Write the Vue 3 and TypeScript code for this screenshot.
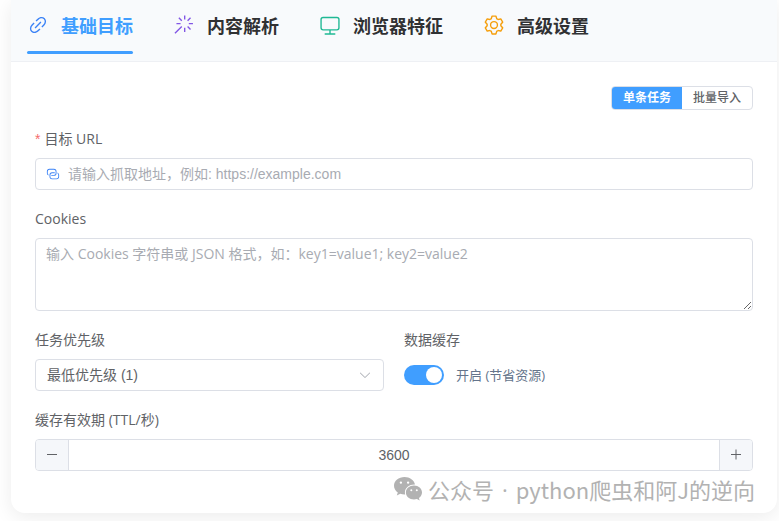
<script setup lang="ts">
import { ref } from 'vue'

interface Tab {
  key: string
  label: string
  tone: string
  icon: string
}

const tabs: Tab[] = [
  {
    key: 'base',
    label: '基础目标',
    tone: 'blue',
    icon: 'M715.648 625.152 670.4 579.904l90.496-90.56c75.008-74.944 85.12-186.368 22.656-248.896-62.528-62.464-173.952-52.352-248.96 22.656L444.16 353.6l-45.248-45.248 90.496-90.496c100.032-99.968 251.968-110.08 339.456-22.656 87.488 87.488 77.312 239.424-22.656 339.456l-90.496 90.496zm-90.496 90.496-90.496 90.496C434.624 906.112 282.688 916.224 195.2 828.8c-87.488-87.488-77.312-239.424 22.656-339.456l90.496-90.496 45.248 45.248-90.496 90.56c-75.008 74.944-85.12 186.368-22.656 248.896 62.528 62.464 173.952 52.352 248.96-22.656l90.496-90.496 45.248 45.248zm0-362.048 45.248 45.248L398.848 670.4 353.6 625.152 625.152 353.6z',
  },
  {
    key: 'parse',
    label: '内容解析',
    tone: 'purple',
    icon: 'M512 64h64v192h-64V64zm0 576h64v192h-64V640zM160 480v-64h192v64H160zm576 0v-64h192v64H736zM249.856 199.04l45.248-45.184L430.848 289.6 385.6 334.848 249.856 199.104zM657.152 606.4l45.248-45.248 135.744 135.744-45.248 45.248L657.152 606.4zM114.048 923.2 68.8 877.952l316.8-316.8 45.248 45.248-316.8 316.8zM702.4 334.848 657.152 289.6l135.744-135.744 45.248 45.248L702.4 334.848z',
  },
  {
    key: 'browser',
    label: '浏览器特征',
    tone: 'green',
    icon: 'M544 768v128h192a32 32 0 1 1 0 64H288a32 32 0 1 1 0-64h192V768H192A128 128 0 0 1 64 640V256a128 128 0 0 1 128-128h640a128 128 0 0 1 128 128v384a128 128 0 0 1-128 128H544zM192 192a64 64 0 0 0-64 64v384a64 64 0 0 0 64 64h640a64 64 0 0 0 64-64V256a64 64 0 0 0-64-64H192z',
  },
  {
    key: 'advanced',
    label: '高级设置',
    tone: 'orange',
    icon: 'M600.704 64a32 32 0 0 1 30.464 22.208l35.2 109.376c14.784 7.232 28.928 15.36 42.432 24.512l112.384-24.192a32 32 0 0 1 34.432 15.36L944.32 364.8a32 32 0 0 1-4.032 37.504l-77.12 85.12a357.12 357.12 0 0 1 0 49.024l77.12 85.248a32 32 0 0 1 4.032 37.504l-88.704 153.6a32 32 0 0 1-34.432 15.296L708.8 803.904c-13.44 9.088-27.648 17.28-42.368 24.512l-35.264 109.376A32 32 0 0 1 600.704 960H423.296a32 32 0 0 1-30.464-22.208L357.696 828.48a351.616 351.616 0 0 1-42.56-24.64l-112.32 24.256a32 32 0 0 1-34.432-15.36L79.68 659.2a32 32 0 0 1 4.032-37.504l77.12-85.248a357.12 357.12 0 0 1 0-48.896l-77.12-85.248A32 32 0 0 1 79.68 364.8l88.704-153.6a32 32 0 0 1 34.432-15.296l112.32 24.256c13.568-9.152 27.776-17.408 42.56-24.64l35.2-109.312A32 32 0 0 1 423.232 64H600.64zm-23.424 64H446.72l-36.352 113.088-24.512 11.968a294.113 294.113 0 0 0-34.816 20.096l-22.656 15.36-116.224-25.088-65.28 113.152 79.68 88.192-1.92 27.136a293.12 293.12 0 0 0 0 40.192l1.92 27.136-79.808 88.192 65.344 113.152 116.224-25.024 22.656 15.296a294.113 294.113 0 0 0 34.816 20.096l24.512 11.968L446.72 896h130.688l36.48-113.152 24.448-11.904a288.282 288.282 0 0 0 34.752-20.096l22.592-15.296 116.288 25.024 65.28-113.152-79.744-88.192 1.92-27.136a293.12 293.12 0 0 0 0-40.256l-1.92-27.136 79.808-88.128-65.344-113.152-116.288 24.96-22.592-15.232a287.616 287.616 0 0 0-34.752-20.096l-24.448-11.904L577.344 128zM512 320a192 192 0 1 1 0 384 192 192 0 0 1 0-384zm0 64a128 128 0 1 0 0 256 128 128 0 0 0 0-256z',
  },
]

const activeTab = ref('base')
const mode = ref<'single' | 'batch'>('single')
const url = ref('')
const cookies = ref('')
const priority = ref(1)
const cacheEnabled = ref(true)
const ttl = ref(3600)

function stepTtl(delta: number): void {
  ttl.value = Math.max(0, ttl.value + delta)
}
</script>

<template>
  <main class="card">
    <div class="tabs" role="tablist">
      <button
        v-for="tab in tabs"
        :key="tab.key"
        type="button"
        role="tab"
        class="tab"
        :class="{ active: tab.key === activeTab }"
        :aria-selected="tab.key === activeTab"
        @click="activeTab = tab.key"
      >
        <svg class="tab-icon" :class="tab.tone" viewBox="0 0 1024 1024" aria-hidden="true">
          <path :d="tab.icon" />
        </svg>
        <span>{{ tab.label }}</span>
      </button>
    </div>

    <form class="form" @submit.prevent>
      <div class="mode" role="radiogroup">
        <label class="mode-item">
          <input v-model="mode" type="radio" name="mode" value="single" />
          <span>单条任务</span>
        </label>
        <label class="mode-item">
          <input v-model="mode" type="radio" name="mode" value="batch" />
          <span>批量导入</span>
        </label>
      </div>

      <div class="field">
        <label class="label required" for="url">目标 URL</label>
        <div class="box url-box">
          <svg class="prefix" viewBox="0 0 1024 1024" aria-hidden="true">
            <path d="M640 384v64H448a128 128 0 0 0-128 128v128a128 128 0 0 0 128 128h320a128 128 0 0 0 128-128V576a128 128 0 0 0-64-110.848V394.88c74.56 26.368 128 97.472 128 181.056v128a192 192 0 0 1-192 192H448a192 192 0 0 1-192-192V576a192 192 0 0 1 192-192h192z" />
            <path d="M384 640v-64h192a128 128 0 0 0 128-128V320a128 128 0 0 0-128-128H256a128 128 0 0 0-128 128v128a128 128 0 0 0 64 110.848v70.272A192.064 192.064 0 0 1 64 448V320a192 192 0 0 1 192-192h320a192 192 0 0 1 192 192v128a192 192 0 0 1-192 192H384z" />
          </svg>
          <input
            id="url"
            v-model="url"
            class="text-input"
            type="text"
            placeholder="请输入抓取地址，例如: https://example.com"
          />
        </div>
      </div>

      <div class="field">
        <label class="label" for="cookies">Cookies</label>
        <textarea
          id="cookies"
          v-model="cookies"
          class="textarea"
          placeholder="输入 Cookies 字符串或 JSON 格式，如：key1=value1; key2=value2"
        ></textarea>
      </div>

      <div class="row">
        <div class="field">
          <label class="label" for="priority">任务优先级</label>
          <div class="box">
            <select id="priority" v-model="priority" class="select">
              <option :value="1">最低优先级 (1)</option>
            </select>
            <svg class="arrow" viewBox="0 0 1024 1024" aria-hidden="true">
              <path d="M831.872 340.864 512 652.672 192.128 340.864a30.592 30.592 0 0 0-42.752 0 29.12 29.12 0 0 0 0 41.6L489.664 714.24a32 32 0 0 0 44.672 0l340.288-331.712a29.12 29.12 0 0 0 0-41.728 30.592 30.592 0 0 0-42.752 0z" />
            </svg>
          </div>
        </div>
        <div class="field">
          <label class="label" for="cache">数据缓存</label>
          <div class="switch-row">
            <input id="cache" v-model="cacheEnabled" class="switch" type="checkbox" role="switch" />
            <label class="switch-text" for="cache">开启 (节省资源)</label>
          </div>
        </div>
      </div>

      <div class="field">
        <label class="label" for="ttl">缓存有效期 (TTL/秒)</label>
        <div class="box number">
          <button class="step" type="button" aria-label="减少" @click="stepTtl(-1)">
            <svg viewBox="0 0 14 14" aria-hidden="true"><path d="M2 6.5h10" /></svg>
          </button>
          <input id="ttl" v-model.number="ttl" class="number-input" type="number" min="0" />
          <button class="step" type="button" aria-label="增加" @click="stepTtl(1)">
            <svg viewBox="0 0 14 14" aria-hidden="true"><path d="M2 6.5h10M7 1.5v10" /></svg>
          </button>
        </div>
      </div>
    </form>

    <div class="watermark">
      <svg viewBox="0 0 28 24" aria-hidden="true">
        <path
          fill-rule="evenodd"
          d="M10.500 0C4.700 0 0 3.900 0 8.800c0 2.700 1.500 5.100 3.800 6.800l-1 3 3.500-1.800c1.300.4 2.700.6 4.200.6h.7c-.2-.6-.3-1.200-.3-1.900 0-4.500 4.300-8 9.500-8h.6C20.200 3.200 15.800 0 10.500 0zM6.900 4.400a1.200 1.200 0 1 1 0 2.400 1.200 1.200 0 0 1 0-2.400zm7.200 0a1.200 1.200 0 1 1 0 2.400 1.200 1.200 0 0 1 0-2.400z"
        />
        <path
          fill-rule="evenodd"
          d="M20 8.500c-4.600 0-8.100 3.100-8.100 7s3.500 7 8.100 7c1 0 2-.2 2.900-.5l2.800 1.500-.8-2.500c1.900-1.300 3.100-3.300 3.100-5.500 0-3.900-3.500-7-8-7zm-2.700 3.700a1 1 0 1 1 0 2 1 1 0 0 1 0-2zm5.500 0a1 1 0 1 1 0 2 1 1 0 0 1 0-2z"
        />
      </svg>
      <div class="watermark-text">
        <span>公众号</span>
        <span class="dot">·</span>
        <span>python爬虫和阿J的逆向</span>
      </div>
    </div>
  </main>
</template>

<style>
body {
  background: #fff;
  overflow: hidden;
}
</style>

<style scoped>
* {
  box-sizing: border-box;
}

.card {
  position: relative;
  margin: 0 2px 8px 11px;
  background: #fff;
  border-radius: 0 0 14px 14px;
  box-shadow: 0 4px 20px rgba(0, 0, 0, 0.08);
  color: #606266;
  font-family: "Open Sans", "Noto Sans CJK SC", sans-serif;
  font-size: 14px;
}

.tabs {
  display: flex;
  gap: 40px;
  height: 62px;
  padding: 0 16px 7px;
  background: #f8fafc;
  border-bottom: 1px solid #eef0f4;
}

.tab {
  position: relative;
  display: flex;
  align-items: center;
  gap: 12px;
  padding: 0 0 4px;
  border: 0;
  background: none;
  color: #303133;
  font: 700 18px/26px "Noto Sans CJK SC", sans-serif;
  white-space: nowrap;
  cursor: pointer;
}

.tab.active {
  color: #409eff;
}

.tab.active::after {
  content: "";
  position: absolute;
  left: 0;
  right: 0;
  bottom: 0;
  height: 3px;
  border-radius: 2px;
  background: #409eff;
}

.tab-icon {
  width: 22px;
  height: 22px;
  fill: currentColor;
}

.blue {
  color: #3b82f6;
}

.purple {
  color: #8257e5;
}

.green {
  color: #1fb994;
}

.orange {
  color: #f59e0b;
}

.form {
  display: flex;
  flex-direction: column;
  gap: 18px;
  padding: 24px 24px 42px;
}

.mode {
  display: flex;
  align-self: flex-end;
  height: 24px;
  border: 1px solid #dcdfe6;
  border-radius: 4px;
  overflow: hidden;
}

.mode-item {
  position: relative;
  display: flex;
  cursor: pointer;
}

.mode-item input {
  position: absolute;
  opacity: 0;
  margin: 0;
}

.mode-item span {
  padding: 0 11px;
  font-size: 12px;
  line-height: 22px;
  font-weight: 500;
}

.mode-item input:checked + span {
  background: #409eff;
  color: #fff;
  font-weight: 700;
}

.field {
  display: flex;
  flex-direction: column;
  gap: 8px;
  min-width: 0;
}

.label {
  line-height: 22px;
}

.required::before {
  content: "*";
  margin-right: 4px;
  color: #f56c6c;
  font-family: "Liberation Sans", sans-serif;
}

.box {
  position: relative;
  display: flex;
  align-items: center;
  height: 32px;
  border: 1px solid #dcdfe6;
  border-radius: 4px;
  background: #fff;
}

.url-box {
  gap: 8px;
  padding: 0 10px;
}

.prefix {
  width: 14px;
  height: 14px;
  fill: #3b82f6;
}

.text-input,
.select,
.number-input {
  flex: 1;
  min-width: 0;
  height: 30px;
  padding: 0;
  border: 0;
  outline: 0;
  background: none;
  color: #606266;
  font: 14px "Liberation Sans", "Noto Sans CJK SC", sans-serif;
}

.text-input::placeholder,
.textarea::placeholder {
  color: #a8abb2;
  opacity: 1;
}

.textarea {
  display: block;
  width: 100%;
  height: 73px;
  padding: 4px 10px;
  border: 1px solid #dcdfe6;
  border-radius: 4px;
  outline: 0;
  color: #606266;
  font: 14px/21px "Open Sans", "Noto Sans CJK SC", sans-serif;
  resize: vertical;
}

.row {
  display: grid;
  grid-template-columns: 1fr 1fr;
  gap: 20px;
}

.select {
  padding: 0 11px;
  appearance: none;
}

.arrow {
  position: absolute;
  right: 11px;
  width: 14px;
  height: 14px;
  fill: #a8abb2;
  pointer-events: none;
}

.switch-row {
  display: flex;
  align-items: center;
  gap: 12px;
  height: 32px;
}

.switch {
  display: flex;
  align-items: center;
  width: 40px;
  height: 20px;
  margin: 0;
  padding: 0 2px;
  border-radius: 10px;
  background: #dcdfe6;
  appearance: none;
  cursor: pointer;
}

.switch::before {
  content: "";
  width: 16px;
  height: 16px;
  border-radius: 50%;
  background: #fff;
}

.switch:checked {
  justify-content: flex-end;
  background: #409eff;
}

.switch-text {
  color: #64748b;
  font-size: 13px;
  line-height: 20px;
}

.number {
  overflow: hidden;
}

.step {
  display: flex;
  align-items: center;
  justify-content: center;
  width: 33px;
  height: 30px;
  padding: 0;
  border: 0;
  border-right: 1px solid #dcdfe6;
  background: #f5f7fa;
  cursor: pointer;
}

.step:last-child {
  border-right: 0;
  border-left: 1px solid #dcdfe6;
}

.step svg {
  width: 14px;
  height: 14px;
  stroke: #606266;
}

.number-input {
  text-align: center;
  appearance: textfield;
}

.number-input::-webkit-inner-spin-button {
  appearance: none;
  margin: 0;
}

.watermark {
  position: absolute;
  right: 22px;
  bottom: 10px;
  display: flex;
  align-items: center;
  gap: 6px;
  color: #b2b2b2;
  font: 22px/28px "Noto Sans CJK SC", sans-serif;
  white-space: nowrap;
  pointer-events: none;
}

.watermark svg {
  width: 28px;
  height: 24px;
  fill: currentColor;
}

.watermark-text {
  display: flex;
  gap: 8px;
}

.dot {
  font-family: "Open Sans", sans-serif;
}
</style>
